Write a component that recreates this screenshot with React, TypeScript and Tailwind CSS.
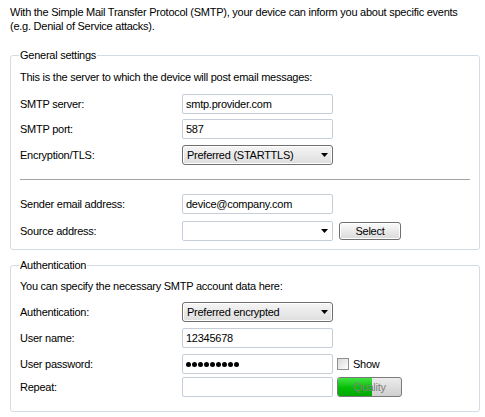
import { ReactNode } from "react";

const inputBox =
  "flex h-[20px] w-[151px] items-center rounded-[2px] border border-[#c5ced8] bg-white px-[3px]";

function Row({ label, className, children }: { label: string; className?: string; children: ReactNode }) {
  return (
    <div className={`flex h-[20px] items-center ${className ?? ""}`}>
      <span className="w-[162px] shrink-0">{label}</span>
      {children}
    </div>
  );
}

function Arrow() {
  return (
    <svg width="7" height="4" viewBox="0 0 7 4" className="ml-auto mr-[2px] shrink-0">
      <path d="M0 0h7L3.5 4z" fill="#000" />
    </svg>
  );
}

function Dropdown({ value }: { value: string }) {
  return (
    <div className="flex h-[20px] w-[151px] items-center rounded-[3px] border border-[#6f6f6f] bg-linear-to-b from-[#f5f5f5] to-[#dedede] pl-[4px] pr-[2px] shadow-[inset_0_0_0_1px_#ffffff]">
      <span>{value}</span>
      <Arrow />
    </div>
  );
}

function Button({ children, className }: { children: ReactNode; className?: string }) {
  return (
    <div
      className={`flex items-center justify-center rounded-[3px] border border-[#707070] bg-linear-to-b from-[#fbfbfb] to-[#dadada] shadow-[inset_0_0_0_1px_#ffffff] ${className ?? ""}`}
    >
      {children}
    </div>
  );
}

function Group({ title, className, children }: { title: string; className?: string; children: ReactNode }) {
  return (
    <fieldset className={`ml-[10px] mr-[5px] rounded-[3px] border border-[#d3dbe3] px-[9px] ${className ?? ""}`}>
      <legend className="-ml-[1px] px-[1px] leading-[14px]">{title}</legend>
      {children}
    </fieldset>
  );
}

export default function App() {
  return (
    <div className="h-[417px] w-[485px] overflow-hidden bg-white font-['Liberation_Sans',Arial,sans-serif] text-[11px] leading-[14px] tracking-[-0.25px] text-black">
      <p className="pl-[10px] pt-[5px]">
        With the Simple Mail Transfer Protocol (SMTP), your device can inform you about specific events
        <br />
        (e.g. Denial of Service attacks).
      </p>

      <Group title="General settings" className="mt-[15px] pb-[8px]">
        <p className="mt-[8px]">This is the server to which the device will post email messages:</p>
        <Row label="SMTP server:" className="mt-[10px]">
          <div className={inputBox}>smtp.provider.com</div>
        </Row>
        <Row label="SMTP port:" className="mt-[5px]">
          <div className={inputBox}>587</div>
        </Row>
        <Row label="Encryption/TLS:" className="mt-[6px]">
          <Dropdown value="Preferred (STARTTLS)" />
        </Row>
        <div className="mt-[14px] h-px bg-[#a3a3a3]" />
        <Row label="Sender email address:" className="mt-[14px]">
          <div className={inputBox}>device@company.com</div>
        </Row>
        <Row label="Source address:" className="mt-[7px]">
          <div className={`${inputBox} pr-[2px]`}>
            <Arrow />
          </div>
          <Button className="ml-[6px] h-[18px] w-[62px]">Select</Button>
        </Row>
      </Group>

      <Group title="Authentication" className="mt-[8px] pb-[14px]">
        <p className="mt-[7px]">You can specify the necessary SMTP account data here:</p>
        <Row label="Authentication:" className="mt-[9px]">
          <Dropdown value="Preferred encrypted" />
        </Row>
        <Row label="User name:" className="mt-[6px]">
          <div className={inputBox}>12345678</div>
        </Row>
        <Row label="User password:" className="mt-[6px]">
          <div className={`${inputBox} gap-[1px] border-[#3d7bad]`}>
            {Array.from({ length: 9 }).map((_, i) => (
              <span key={i} className="h-[5px] w-[5px] rounded-full bg-black" />
            ))}
          </div>
          <div className="ml-[4px] h-[12px] w-[12px] border border-[#8f8f8f] bg-linear-to-br from-[#d8d8d8] to-[#ffffff]" />
          <span className="ml-[4px]">Show</span>
        </Row>
        <Row label="Repeat:" className="mt-[3px]">
          <div className={inputBox} />
          <div className="relative ml-[4px] flex h-[20px] w-[65px] items-center justify-center overflow-hidden rounded-[3px] border border-[#7a7a7a] bg-linear-to-b from-[#ececec] to-[#cfcfcf]">
            <div className="absolute inset-y-0 left-0 w-[34px] bg-linear-to-b from-[#3fe23f] via-[#06c006] to-[#02a802]" />
            <span className="relative text-[#7f7f7f]">Quality</span>
          </div>
        </Row>
      </Group>
    </div>
  );
}
